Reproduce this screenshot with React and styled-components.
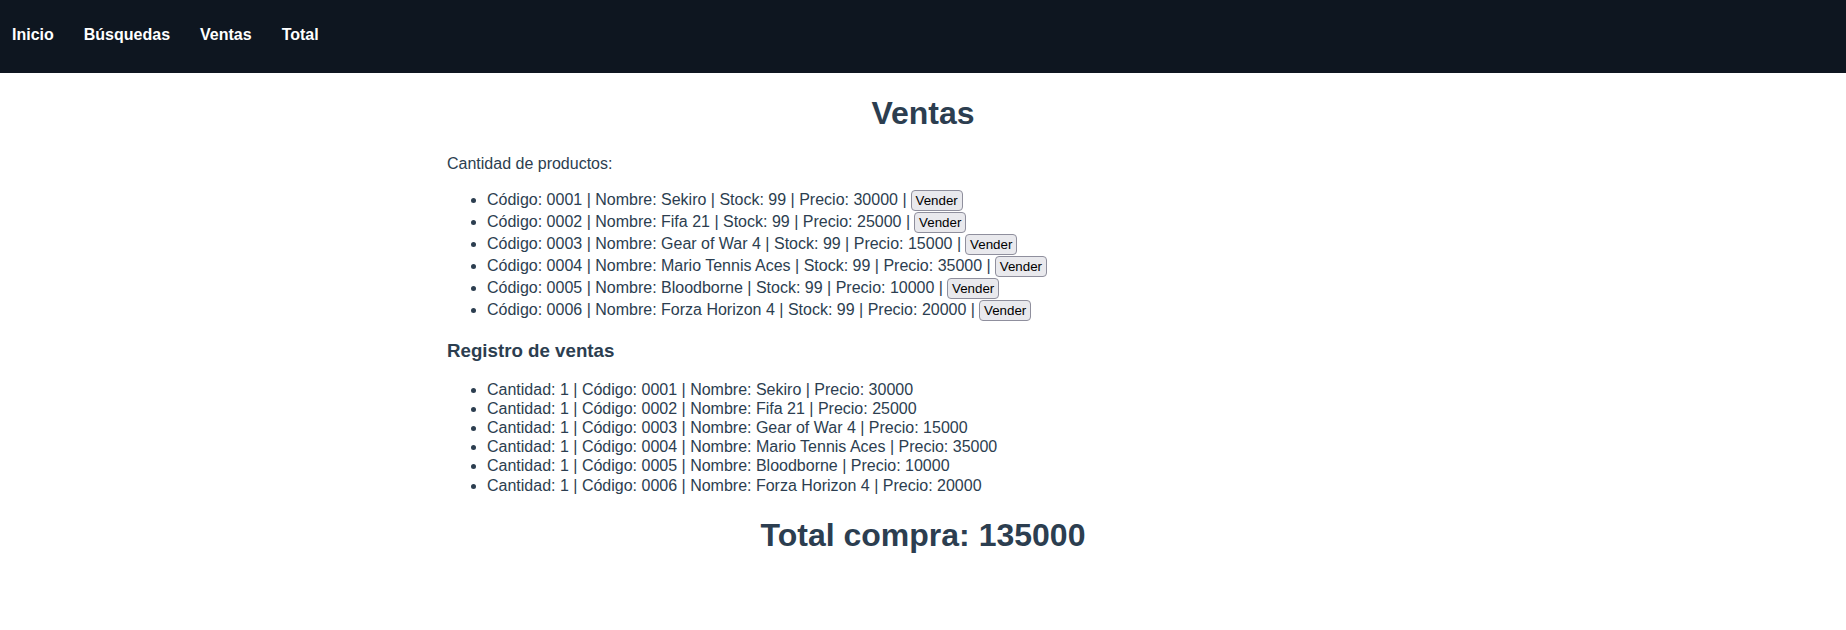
import React from "react"
import styled, { createGlobalStyle } from "styled-components"

const productos = [
  { codigo: "0001", nombre: "Sekiro", stock: 99, precio: 30000 },
  { codigo: "0002", nombre: "Fifa 21", stock: 99, precio: 25000 },
  { codigo: "0003", nombre: "Gear of War 4", stock: 99, precio: 15000 },
  { codigo: "0004", nombre: "Mario Tennis Aces", stock: 99, precio: 35000 },
  { codigo: "0005", nombre: "Bloodborne", stock: 99, precio: 10000 },
  { codigo: "0006", nombre: "Forza Horizon 4", stock: 99, precio: 20000 },
]

const GlobalStyle = createGlobalStyle`
  body {
    margin: 0;
    background: #fff;
    font-family: "Liberation Sans", Arial, Helvetica, sans-serif;
    line-height: 1.2;
    color: #2c3e50;
  }
`

const Nav = styled.nav`
  height: 73px;
  box-sizing: border-box;
  padding: 25px 12px 0;
  background-color: #0e1620;
  display: flex;
  gap: 30px;
`

const NavLink = styled.a`
  color: #fff;
  font-weight: bold;
  font-size: 16px;
  text-decoration: none;
  cursor: pointer;
`

const Main = styled.main`
  width: 952px;
  margin: 0 auto;
`

const Title = styled.h1`
  font-size: 32px;
  margin: 21.44px 0;
  text-align: center;
`

const Label = styled.p`
  margin: 16px 0;
  font-size: 16px;
`

const List = styled.ul`
  margin: 16px 0;
  padding-left: 40px;
  font-size: 16px;

  li {
    line-height: ${props => props.$rowHeight || "19.2px"};
  }
`

const SubTitle = styled.h3`
  font-size: 18.72px;
  margin: 18.72px 0 17px;
`

const SellButton = styled.button`
  font-family: "Liberation Sans", Arial, sans-serif;
  font-size: 13.33px;
  line-height: 15px;
  color: #000;
  background: #e9e9ed;
  border: 1px solid #8f8f9d;
  border-radius: 4px;
  padding: 2px 4px;
  margin-left: 4px;
  cursor: pointer;
`

const Total = styled.h1`
  font-size: 32px;
  margin: 21.44px 0;
  text-align: center;
`

const App = () => {
  const total = productos.reduce((sum, p) => sum + p.precio, 0)

  return (
    <>
      <GlobalStyle />
      <Nav>
        <NavLink>Inicio</NavLink>
        <NavLink>Búsquedas</NavLink>
        <NavLink>Ventas</NavLink>
        <NavLink>Total</NavLink>
      </Nav>
      <Main>
        <Title>Ventas</Title>
        <Label>Cantidad de productos:</Label>
        <List $rowHeight="22px">
          {productos.map(p => (
            <li key={p.codigo}>
              Código: {p.codigo} | Nombre: {p.nombre} | Stock: {p.stock} | Precio:{" "}
              {p.precio} |<SellButton>Vender</SellButton>
            </li>
          ))}
        </List>
        <SubTitle>Registro de ventas</SubTitle>
        <List>
          {productos.map(p => (
            <li key={p.codigo}>
              Cantidad: 1 | Código: {p.codigo} | Nombre: {p.nombre} | Precio:{" "}
              {p.precio}
            </li>
          ))}
        </List>
        <Total>Total compra: {total}</Total>
      </Main>
    </>
  )
}

export default App
